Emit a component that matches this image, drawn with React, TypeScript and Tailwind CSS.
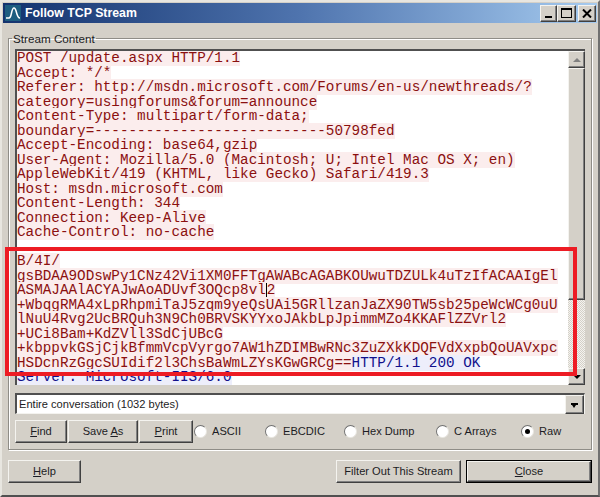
import React from 'react';

const ui = "font-['Liberation_Sans',sans-serif] text-[11.1px] text-[#1c1c24]";
const bevel =
  'border border-t-[#f4f3ef] border-l-[#f4f3ef] border-r-[#404040] border-b-[#404040] shadow-[inset_-1px_-1px_0_#808080] bg-[#d4d0c8]';

const redLines = [
  'POST /update.aspx HTTP/1.1',
  'Accept: */*',
  'Referer: http://msdn.microsoft.com/Forums/en-us/newthreads/?',
  'category=usingforums&forum=announce',
  'Content-Type: multipart/form-data;',
  'boundary=---------------------------50798fed',
  'Accept-Encoding: base64,gzip',
  'User-Agent: Mozilla/5.0 (Macintosh; U; Intel Mac OS X; en)',
  'AppleWebKit/419 (KHTML, like Gecko) Safari/419.3',
  'Host: msdn.microsoft.com',
  'Content-Length: 344',
  'Connection: Keep-Alive',
  'Cache-Control: no-cache',
];

const payload = [
  'B/4I/',
  'gsBDAA9ODswPy1CNz42Vi1XM0FFTgAWABcAGABKOUwuTDZULk4uTzIfACAAIgEl',
  'ASMAJAAlACYAJwAoADUvf3OQcp8vl|2',
  '+WbqgRMA4xLpRhpmiTaJ5zqm9yeQsUAi5GRllzanJaZX90TW5sb25peWcWCg0uU',
  'lNuU4Rvg2UcBRQuh3N9Ch0BRVSKYYxoJAkbLpJpimmMZo4KKAFlZZVrl2',
  '+UCi8Bam+KdZVll3SdCjUBcG',
  '+kbppvkGSjCjkBfmmVcpVyrgo7AW1hZDIMBwRNc3ZuZXkKDQFVdXxpbQoUAVxpc',
];

const Red: React.FC<{ text: string }> = ({ text }) => {
  const [before, after] = text.split('|');
  return (
    <div className="h-[14.5px]">
      <span className="bg-[#fbeded] text-[#8b1010]">
        {before}
        {after !== undefined && <span className="inline-block w-0 h-[14px] border-l border-black align-top" />}
        {after}
      </span>
    </div>
  );
};

const Btn: React.FC<{ w: string; children: React.ReactNode }> = ({ w, children }) => (
  <div className={`${w} h-[23px] flex items-center justify-center shrink-0 whitespace-nowrap ${bevel}`}>{children}</div>
);

const Radio: React.FC<{ w: string; label: string; on?: boolean }> = ({ w, label, on }) => (
  <div className={`${w} flex items-center shrink-0`}>
    <div className="w-[13px] h-[13px] rounded-full bg-white border border-t-[#707070] border-l-[#707070] border-r-[#e8e6e0] border-b-[#e8e6e0] flex items-center justify-center">
      {on && <div className="w-[5px] h-[5px] rounded-full bg-black" />}
    </div>
    <span className="ml-[5px]">{label}</span>
  </div>
);

export default function App() {
  return (
    <div className={`relative w-[600px] h-[497px] overflow-hidden bg-[#d4d0c8] border-2 border-t-[#e8e6e0] border-l-[#e8e6e0] border-r-[#707070] border-b-[#505050] ${ui}`}>
      {/* title bar */}
      <div className="mx-px mt-px h-[20px] flex items-center bg-gradient-to-r from-[#14336e] via-[#4f74ae] to-[#a6cbef]">
        <svg width="16" height="16" viewBox="0 0 16 16" className="ml-[2px] shrink-0">
          <rect width="16" height="16" fill="#1d5d80" />
          <path d="M1 13 H4 C7 13 6 3 9 3 C12 3 11 13 15 13" fill="none" stroke="#fff" strokeWidth="1.5" />
        </svg>
        <span className="ml-[4px] font-['Liberation_Sans',sans-serif] font-bold text-[12.3px] text-white">Follow TCP Stream</span>
        <div className="ml-auto mr-px flex">
          <div className={`w-[17px] h-[17px] relative ${bevel}`}>
            <div className="absolute left-[4px] bottom-[3px] w-[7px] h-[2px] bg-black" />
          </div>
          <div className={`w-[19px] h-[17px] flex items-center justify-center ${bevel}`}>
            <div className="w-[11px] h-[10px] border border-t-2 border-black" />
          </div>
          <div className={`ml-[2px] w-[18px] h-[17px] flex items-center justify-center ${bevel}`}>
            <svg width="10" height="9" viewBox="0 0 10 9">
              <path d="M1 0.5 L9 8.5 M9 0.5 L1 8.5" stroke="#000" strokeWidth="2" />
            </svg>
          </div>
        </div>
      </div>

      {/* stream group */}
      <fieldset className="mx-[6px] mt-[9px] h-[418px] border border-[#8f8d87] shadow-[1px_1px_0_#fff,inset_1px_1px_0_#fff] pl-[6px] pr-[6px]">
        <legend className="-ml-[3px] px-[1px] leading-[13px] text-[11.7px]">Stream Content</legend>
        <div className="mt-[4px] flex h-[336px] border-t-2 border-l-2 border-t-[#505050] border-l-[#505050] bg-white">
          <div className="flex-1 min-w-0 overflow-hidden whitespace-nowrap font-['Liberation_Mono',monospace] text-[14.3px] leading-[14.5px]">
            {redLines.map((l) => (
              <Red key={l} text={l} />
            ))}
            <div className="h-[14.5px]" />
            {payload.map((l) => (
              <Red key={l} text={l} />
            ))}
            <div className="h-[14.5px]">
              <span className="bg-[#fbeded] text-[#8b1010]">HSDcnRzGgcSUIdif2l3ChsBaWmLZYsKGwGRCg==</span>
              <span className="bg-[#edeefb] text-[#10108b]">HTTP/1.1 200 OK</span>
            </div>
            <div className="h-[14.5px]">
              <span className="bg-[#edeefb] text-[#10108b]">Server: Microsoft-IIS/6.0</span>
            </div>
          </div>
          {/* scrollbar */}
          <div className="w-[17px] shrink-0 flex flex-col bg-[repeating-conic-gradient(#d4d0c8_0_25%,#f4f3ef_0_50%)] bg-[length:2px_2px]">
            <div className={`h-[17px] shrink-0 flex items-center justify-center ${bevel}`}>
              <div className="w-0 h-0 border-x-[4px] border-x-transparent border-b-[4px] border-b-[#808080]" />
            </div>
            <div className={`h-[232px] shrink-0 ${bevel}`} />
            <div className={`h-[17px] shrink-0 mt-auto flex items-center justify-center ${bevel}`}>
              <div className="w-0 h-0 border-x-[4px] border-x-transparent border-t-[4px] border-t-black" />
            </div>
          </div>
        </div>

        {/* conversation select */}
        <div className="mt-[8px] h-[21px] flex items-center border-t-2 border-l-2 border-t-[#505050] border-l-[#505050] border-r border-b border-r-[#f4f3ef] border-b-[#f4f3ef] bg-white">
          <span className="ml-[2px]">Entire conversation (1032 bytes)</span>
          <div className={`ml-auto w-[19px] h-[19px] flex items-center justify-center ${bevel}`}>
            <div className="w-[7px] h-0 border-t-[2px] border-black relative">
              <div className="absolute left-[1px] top-0 w-0 h-0 border-x-[2.5px] border-x-transparent border-t-[3px] border-t-black" />
            </div>
          </div>
        </div>

        {/* find / save / print and format radios */}
        <div className="mt-[6px] flex items-center">
          <Btn w="w-[52px]"><span><u>F</u>ind</span></Btn>
          <Btn w="ml-px w-[70px]"><span>Save <u>A</u>s</span></Btn>
          <Btn w="ml-px w-[54px]"><span><u>P</u>rint</span></Btn>
          <div className="ml-px flex">
            <Radio w="w-[71px]" label="ASCII" />
            <Radio w="w-[79px]" label="EBCDIC" />
            <Radio w="w-[92px]" label="Hex Dump" />
            <Radio w="w-[85px]" label="C Arrays" />
            <Radio w="w-[50px]" label="Raw" on />
          </div>
        </div>
      </fieldset>

      {/* bottom buttons */}
      <div className="mx-[6px] mt-[10px] flex">
        <Btn w="w-[73px]"><span><u>H</u>elp</span></Btn>
        <Btn w="ml-auto w-[125px]"><span>Filter Out This Stream</span></Btn>
        <div className="ml-[5px] w-[126px] h-[23px] border border-black flex">
          <div className={`flex-1 flex items-center justify-center ${bevel}`}>
            <span><u>C</u>lose</span>
          </div>
        </div>
      </div>

      {/* red annotation drawn over the screenshot */}
      <div className="absolute left-[3px] top-[245px] w-[572px] h-[129px] border-[4px] border-[#ed1c24]" />
    </div>
  );
}
